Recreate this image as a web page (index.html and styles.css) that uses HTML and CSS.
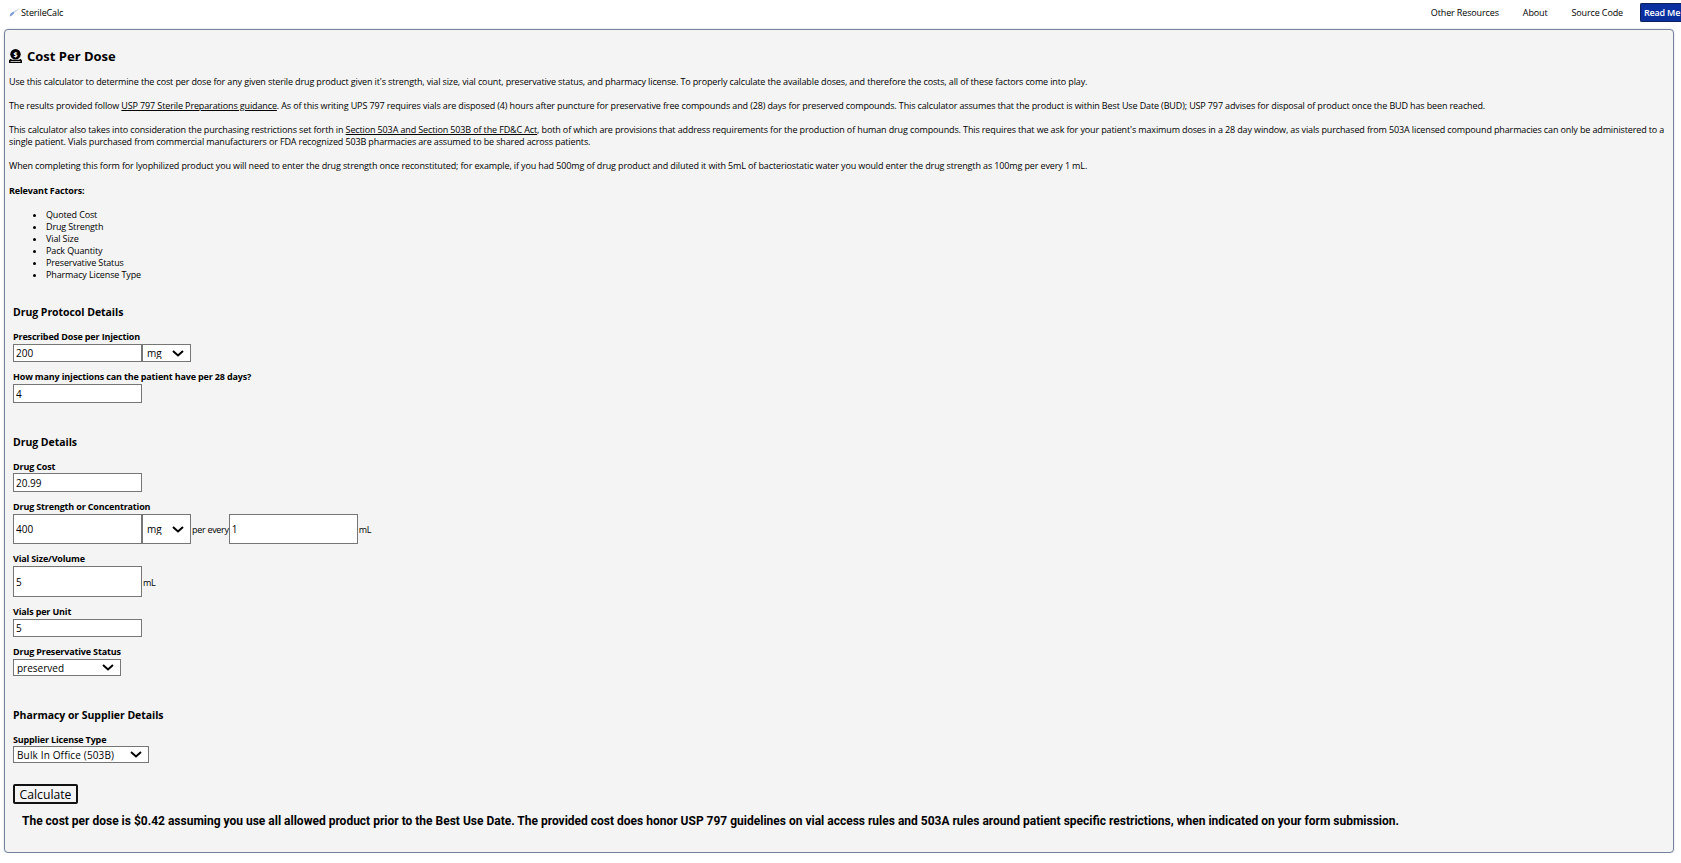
FILE: index.html
```html
<!DOCTYPE html>
<html lang="en">
<head>
<meta charset="utf-8">
<title>SterileCalc</title>
<link rel="stylesheet" href="styles.css">
</head>
<body>
<nav class="topbar">
  <a class="brand" href="#">
    <svg class="brand-icon" viewBox="0 0 11 9" width="11" height="9"><path d="M0.500 8.500 L1.500 5.500 L4.500 3.500 L5.500 5 L3 7.500 Z" fill="#7f9bd8"/><path d="M4.500 3.500 L9.500 0.500 L10 1 L5.500 5 Z" fill="#cdd5e8"/></svg>
    <span>SterileCalc</span>
  </a>
  <ul class="menu">
    <li><a href="#">Other Resources</a></li>
    <li><a href="#">About</a></li>
    <li><a href="#">Source Code</a></li>
    <li><a class="primary" href="#">Read Me</a></li>
  </ul>
</nav>
<main class="card">
  <h1 class="title">
    <svg class="title-icon" viewBox="0 0 13 14" width="13" height="14"><circle cx="6.500" cy="5.200" r="5.200" fill="#000"/><path d="M0 14 V11.500 L1.500 9.800 L3 10.800 H10 L11.500 9.800 L13 11.500 V14 Z M1.500 12.800 H11.500 V12 H1.500 Z" fill="#000" fill-rule="evenodd"/><text x="6.500" y="7.800" class="dollar">$</text></svg>
    <span>Cost Per Dose</span>
  </h1>
  <p>Use this calculator to determine the cost per dose for any given sterile drug product given it's strength, vial size, vial count, preservative status, and pharmacy license. To properly calculate the available doses, and therefore the costs, all of these factors come into play.</p>
  <p>The results provided follow <a href="#">USP 797 Sterile Preparations guidance</a>. As of this writing UPS 797 requires vials are disposed (4) hours after puncture for preservative free compounds and (28) days for preserved compounds. This calculator assumes that the product is within Best Use Date (BUD); USP 797 advises for disposal of product once the BUD has been reached.</p>
  <p>This calculator also takes into consideration the purchasing restrictions set forth in <a href="#">Section 503A and Section 503B of the FD&amp;C Act</a>, both of which are provisions that address requirements for the production of human drug compounds. This requires that we ask for your patient's maximum doses in a 28 day window, as vials purchased from 503A licensed compound pharmacies can only be administered to a single patient. Vials purchased from commercial manufacturers or FDA recognized 503B pharmacies are assumed to be shared across patients.</p>
  <p>When completing this form for lyophilized product you will need to enter the drug strength once reconstituted; for example, if you had 500mg of drug product and diluted it with 5mL of bacteriostatic water you would enter the drug strength as 100mg per every 1 mL.</p>
  <p class="factors-label"><strong>Relevant Factors:</strong></p>
  <ul class="factors">
    <li>Quoted Cost</li>
    <li>Drug Strength</li>
    <li>Vial Size</li>
    <li>Pack Quantity</li>
    <li>Preservative Status</li>
    <li>Pharmacy License Type</li>
  </ul>
  <form class="form">
    <section class="group">
      <h2>Drug Protocol Details</h2>
      <div class="field">
        <label>Prescribed Dose per Injection</label>
        <div class="row"><input class="text slim" value="200"><select class="unit slim"><option>mg</option></select></div>
      </div>
      <div class="field">
        <label>How many injections can the patient have per 28 days?</label>
        <div class="row"><input class="text" value="4"></div>
      </div>
    </section>
    <section class="group">
      <h2>Drug Details</h2>
      <div class="field">
        <label>Drug Cost</label>
        <div class="row"><input class="text" value="20.99"></div>
      </div>
      <div class="field">
        <label>Drug Strength or Concentration</label>
        <div class="row"><input class="text tall" value="400"><select class="unit tall"><option>mg</option></select><span class="suffix">per every</span><input class="text tall" value="1"><span class="suffix">mL</span></div>
      </div>
      <div class="field">
        <label>Vial Size/Volume</label>
        <div class="row"><input class="text taller" value="5"><span class="suffix">mL</span></div>
      </div>
      <div class="field">
        <label>Vials per Unit</label>
        <div class="row"><input class="text slim" value="5"></div>
      </div>
      <div class="field">
        <label>Drug Preservative Status</label>
        <div class="row"><select class="choice preserved"><option>preserved</option></select></div>
      </div>
    </section>
    <section class="group">
      <h2>Pharmacy or Supplier Details</h2>
      <div class="field">
        <label>Supplier License Type</label>
        <div class="row"><select class="choice license"><option>Bulk In Office (503B)</option></select></div>
      </div>
    </section>
    <button type="button" class="calc">Calculate</button>
    <p class="result">The cost per dose is $0.42 assuming you use all allowed product prior to the Best Use Date. The provided cost does honor USP 797 guidelines on vial access rules and 503A rules around patient specific restrictions, when indicated on your form submission.</p>
  </form>
</main>
</body>
</html>
```
FILE: styles.css
```css
* { box-sizing: border-box; }
html, body { margin: 0; padding: 0; }
body {
  background: #fff;
  color: #000;
  font-family: "Open Sans", "Noto Sans", sans-serif;
  font-size: 9px;
  letter-spacing: -0.13px;
  line-height: 12px;
  overflow-x: hidden;
}
a { color: inherit; }
.topbar {
  display: flex;
  justify-content: space-between;
  align-items: center;
  height: 25px;
  padding: 0 0 0 9px;
}
.brand { display: flex; align-items: center; gap: 1px; text-decoration: none; }
.menu { display: flex; align-items: center; list-style: none; margin: 0; padding: 0; }
.menu li { margin-left: 24px; }
.menu li:last-child { margin-left: 17px; }
.menu a { display: block; text-decoration: none; }
.menu a.primary {
  background: #0a2f9e;
  color: #fff;
  border: 1px solid #0b1f5c;
  border-right: 0;
  border-radius: 2px 0 0 2px;
  padding: 3px 0 0 3px;
  font-weight: 600;
  letter-spacing: -0.2px;
  height: 19px;
  width: 41px;
  white-space: nowrap;
}
.card {
  margin: 4px 7px 0 4px;
  height: 824px;
  background: #f4f4f4;
  border: 1px solid #76829c;
  border-radius: 4px;
  padding: 16px 4px 0 4px;
  box-shadow: 0 0 2px rgba(118,130,156,.4);
}
.title {
  display: flex;
  align-items: center;
  gap: 5px;
  margin: 0 0 10px;
  font-size: 13px;
  letter-spacing: 0;
  line-height: 20px;
  font-weight: 700;
}
.dollar { fill: #fff; font-size: 7px; font-weight: 700; text-anchor: middle; letter-spacing: 0; }
p { margin: 0 0 12px; }
.factors-label { margin-top: 13px; }
.factors { margin: 0 0 23px; padding-left: 37px; }
.form { padding-left: 4px; }
.group { margin-bottom: 31px; }
h2 { margin: 0 0 10px; font-size: 10.500px; letter-spacing: -0.05px; line-height: 16px; font-weight: 700; }
.group + .group h2 { margin-bottom: 9px; }
.field { margin-top: 8px; }
h2 + .field { margin-top: 0; }
label { display: block; font-weight: 700; letter-spacing: -0.16px; line-height: 14px; }
.group + .group .field:first-of-type label { padding-top: 1px; margin-bottom: -1px; }
.row { display: flex; align-items: center; }
.text, .unit, .choice {
  appearance: none;
  border: 1px solid #767676;
  border-radius: 0;
  color: #000;
  font: inherit;
  font-size: 10px;
  letter-spacing: 0;
  height: 19px;
  margin: 0;
}
.text { background: #fff; width: 129px; padding: 0 2px; }
.unit, .choice {
  padding: 0 0 0 3px;
  background: #fff url("data:image/svg+xml,%3Csvg xmlns='http://www.w3.org/2000/svg' width='12' height='7' viewBox='0 0 12 7'%3E%3Cpath d='M1 1 L6 5.500 L11 1' fill='none' stroke='%23000' stroke-width='2'/%3E%3C/svg%3E") no-repeat right 6px center;
}
.unit { width: 49px; padding-left: 4px; }
.slim { height: 18px; }
.tall { height: 30px; }
.taller { height: 31px; }
.suffix { padding: 2px 0 0 1px; letter-spacing: -0.3px; }
.preserved { width: 108px; height: 17px; }
.license { width: 136px; height: 17px; letter-spacing: 0.15px; }
.calc {
  display: block;
  width: 65px;
  height: 20px;
  padding: 1px 0 0;
  background: #f4f4f4;
  border: 2px solid #111;
  border-radius: 2px;
  font: inherit;
  font-size: 12.200px;
  letter-spacing: 0;
  color: #000;
}
.group:last-of-type { margin-bottom: 21px; }
.result {
  margin: 8px 0 0 9px;
  font-family: Roboto, "Open Sans", sans-serif;
  font-size: 12px;
  letter-spacing: 0;
  line-height: 18px;
  font-weight: 700;
}
```
